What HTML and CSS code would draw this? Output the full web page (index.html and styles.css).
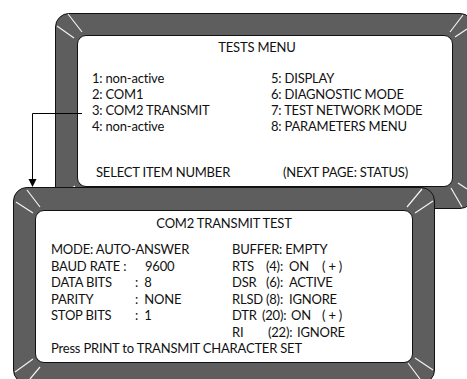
FILE: index.html
```html
<!DOCTYPE html>
<html lang="en">
<head>
    <meta charset="UTF-8">
    <title>Tests Menu / COM2 Transmit Test</title>
    <link rel="stylesheet" href="styles.css">
</head>
<body>
    <div class="desk">
        <!-- back monitor: tests menu -->
        <div class="monitor back">
            <svg class="bevel" width="419" height="196">
                <path d="M13 1 L27 19 M2 13 L19 25 M408 2 L395 19 M412 16 L400 24 M396 175 L407 194 M403 170 L412 176 M20 173 L3 185 M26 178 L16 195"/>
            </svg>
            <div class="screen menu">
                <div class="title">TESTS MENU</div>
                <div class="cols">
                    <ul class="col first">
                        <li>1: non-active</li>
                        <li>2: COM1</li>
                        <li>3: COM2 TRANSMIT</li>
                        <li>4: non-active</li>
                    </ul>
                    <ul class="col">
                        <li>5: DISPLAY</li>
                        <li>6: DIAGNOSTIC MODE</li>
                        <li>7: TEST NETWORK MODE</li>
                        <li>8: PARAMETERS MENU</li>
                    </ul>
                </div>
                <div class="foot">
                    <span class="prompt">SELECT ITEM NUMBER</span>
                    <span>(NEXT PAGE: STATUS)</span>
                </div>
            </div>
        </div>

        <!-- front monitor: com2 transmit test -->
        <div class="monitor front">
            <svg class="bevel" width="422" height="197">
                <path d="M14 3 L27 20 M3 15 L20 26 M409 2 L394 20 M420 14 L402 26 M20 172 L2 185 M27 180 L17 192 M402 171 L420 183 M395 176 L407 192"/>
            </svg>
            <div class="screen test">
                <div class="title">COM2 TRANSMIT TEST</div>
                <div class="cols">
                    <div class="col first">
                        <div>MODE: AUTO-ANSWER</div>
                        <div><span class="lbl wide">BAUD RATE :</span>9600</div>
                        <div><span class="lbl">DATA BITS</span>:&nbsp; 8</div>
                        <div><span class="lbl">PARITY</span>:&nbsp; NONE</div>
                        <div><span class="lbl">STOP BITS</span>:&nbsp; 1</div>
                    </div>
                    <div class="col">
                        <div>BUFFER: EMPTY</div>
                        <div><span class="sig">RTS</span><span class="pin">(4):</span><span class="val">ON</span>( + )</div>
                        <div><span class="sig">DSR</span><span class="pin">(6):</span><span class="val">ACTIVE</span></div>
                        <div><span class="sig">RLSD</span><span class="pin">(8):</span><span class="val">IGNORE</span></div>
                        <div><span class="sig short">DTR</span><span class="pin long">(20):</span><span class="val tight">ON</span>( + )</div>
                        <div><span class="sig ri">RI</span><span class="pin long">(22):</span><span class="val">IGNORE</span></div>
                    </div>
                </div>
                <div class="note">Press PRINT to TRANSMIT CHARACTER SET</div>
            </div>
        </div>

        <svg class="arrow" width="467" height="379">
            <path d="M82 113.5 H32.5 V180" fill="none" stroke="#000" stroke-width="1"/>
            <polygon points="28.5,179 36.5,179 32.5,187" fill="#000"/>
        </svg>
    </div>
</body>
</html>
```

FILE: styles.css
```css
body {
    margin: 0;
    width: 467px;
    height: 379px;
    overflow: hidden;
    background: #fff;
    color: #111;
    font-family: Lato, "Open Sans", sans-serif;
    font-size: 13px;
    line-height: 16.5px;
    letter-spacing: -0.2px;
}
ul {
    list-style: none;
    margin: 0;
    padding: 0;
}
.desk {
    position: relative;
    height: 379px;
    padding-top: 13px;
    box-sizing: border-box;
}
.monitor {
    position: relative;
    box-sizing: border-box;
    background: #5e5e5e;
    border: 1px solid #111;
    border-radius: 14px;
}
.monitor.back {
    margin-left: 55px;
    width: 419px;
    height: 196px;
    padding: 21px 20px 21px 21px;
}
.monitor.front {
    margin: -22px 0 0 13px;
    width: 422px;
    height: 197px;
    padding: 22px 21px 20px 21px;
}
.bevel {
    position: absolute;
    left: -1px;
    top: -1px;
}
.bevel path {
    stroke: #f2f2f2;
    stroke-width: 1.2;
    fill: none;
}
.screen {
    position: relative;
    height: 100%;
    box-sizing: border-box;
    background: #fff;
    border: 1px solid #111;
    border-radius: 9px;
    display: flex;
    flex-direction: column;
}
.title {
    text-align: center;
}
.cols {
    display: flex;
}

/* tests menu */
.menu {
    padding-top: 3px;
}
.menu .title {
    padding-right: 16px;
}
.menu .cols {
    margin-top: 14px;
    padding-left: 14px;
    line-height: 16.3px;
}
.menu .col.first {
    width: 179px;
}
.menu .foot {
    margin-top: auto;
    padding: 0 0 6px 18px;
    display: flex;
}
.menu .prompt {
    width: 187px;
}

/* com2 transmit test */
.test {
    padding-top: 4px;
}
.test .cols {
    margin-top: 9.5px;
    padding-left: 15px;
}
.test .col.first {
    width: 181px;
}
.lbl {
    display: inline-block;
    width: 84px;
}
.lbl.wide {
    width: 94px;
}
.sig, .pin, .val {
    display: inline-block;
}
.sig { width: 34px; }
.sig.short { width: 30px; }
.sig.ri { width: 36px; }
.pin { width: 23px; }
.pin.long { width: 29px; }
.val { width: 33px; }
.val.tight { width: 31px; }
.note {
    padding-left: 15px;
}
.arrow {
    position: absolute;
    left: 0;
    top: 0;
    pointer-events: none;
}
```
